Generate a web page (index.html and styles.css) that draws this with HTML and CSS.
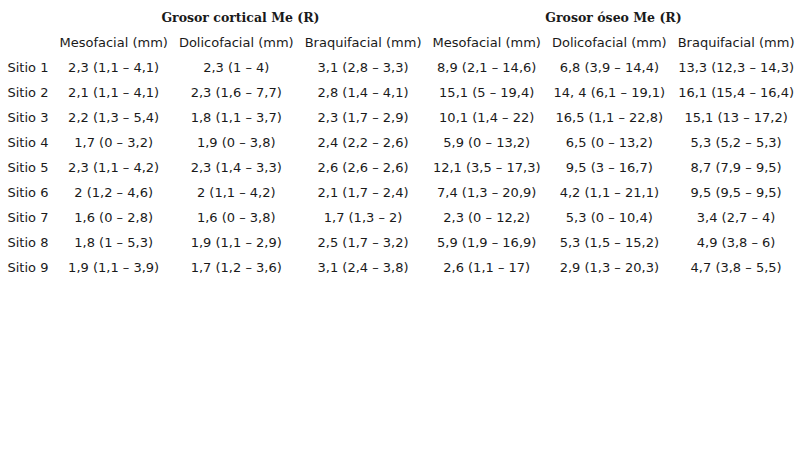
FILE: index.html
```html
<!DOCTYPE html>
<html lang="es">
<head>
<meta charset="utf-8">
<link rel="stylesheet" href="styles.css">
</head>
<body>
<table class="data">
  <thead>
    <tr class="group-row">
      <th></th>
      <th colspan="3" class="group">Grosor cortical Me (R)</th>
      <th colspan="3" class="group">Grosor óseo Me (R)</th>
    </tr>
    <tr class="head-row">
      <th></th>
      <th>Mesofacial (mm)</th>
      <th>Dolicofacial (mm)</th>
      <th>Braquifacial (mm)</th>
      <th>Mesofacial (mm)</th>
      <th>Dolicofacial (mm)</th>
      <th>Braquifacial (mm)</th>
    </tr>
  </thead>
  <tbody>
    <tr><td class="site">Sitio 1</td><td>2,3 (1,1 – 4,1)</td><td>2,3 (1 – 4)</td><td>3,1 (2,8 – 3,3)</td><td>8,9 (2,1 – 14,6)</td><td>6,8 (3,9 – 14,4)</td><td>13,3 (12,3 – 14,3)</td></tr>
    <tr><td class="site">Sitio 2</td><td>2,1 (1,1 – 4,1)</td><td>2,3 (1,6 – 7,7)</td><td>2,8 (1,4 – 4,1)</td><td>15,1 (5 – 19,4)</td><td>14, 4 (6,1 – 19,1)</td><td>16,1 (15,4 – 16,4)</td></tr>
    <tr><td class="site">Sitio 3</td><td>2,2 (1,3 – 5,4)</td><td>1,8 (1,1 – 3,7)</td><td>2,3 (1,7 – 2,9)</td><td>10,1 (1,4 – 22)</td><td>16,5 (1,1 – 22,8)</td><td>15,1 (13 – 17,2)</td></tr>
    <tr><td class="site">Sitio 4</td><td>1,7 (0 – 3,2)</td><td>1,9 (0 – 3,8)</td><td>2,4 (2,2 – 2,6)</td><td>5,9 (0 – 13,2)</td><td>6,5 (0 – 13,2)</td><td>5,3 (5,2 – 5,3)</td></tr>
    <tr><td class="site">Sitio 5</td><td>2,3 (1,1 – 4,2)</td><td>2,3 (1,4 – 3,3)</td><td>2,6 (2,6 – 2,6)</td><td>12,1 (3,5 – 17,3)</td><td>9,5 (3 – 16,7)</td><td>8,7 (7,9 – 9,5)</td></tr>
    <tr><td class="site">Sitio 6</td><td>2 (1,2 – 4,6)</td><td>2 (1,1 – 4,2)</td><td>2,1 (1,7 – 2,4)</td><td>7,4 (1,3 – 20,9)</td><td>4,2 (1,1 – 21,1)</td><td>9,5 (9,5 – 9,5)</td></tr>
    <tr><td class="site">Sitio 7</td><td>1,6 (0 – 2,8)</td><td>1,6 (0 – 3,8)</td><td>1,7 (1,3 – 2)</td><td>2,3 (0 – 12,2)</td><td>5,3 (0 – 10,4)</td><td>3,4 (2,7 – 4)</td></tr>
    <tr><td class="site">Sitio 8</td><td>1,8 (1 – 5,3)</td><td>1,9 (1,1 – 2,9)</td><td>2,5 (1,7 – 3,2)</td><td>5,9 (1,9 – 16,9)</td><td>5,3 (1,5 – 15,2)</td><td>4,9 (3,8 – 6)</td></tr>
    <tr><td class="site">Sitio 9</td><td>1,9 (1,1 – 3,9)</td><td>1,7 (1,2 – 3,6)</td><td>3,1 (2,4 – 3,8)</td><td>2,6 (1,1 – 17)</td><td>2,9 (1,3 – 20,3)</td><td>4,7 (3,8 – 5,5)</td></tr>
  </tbody>
</table>
</body>
</html>
```

FILE: styles.css
```css
html, body {
  margin: 0;
  padding: 0;
  background: #ffffff;
}
body {
  padding: 4px 0 0 2px;
  font-family: "DejaVu Sans", sans-serif;
  font-size: 13px;
  color: #1a1a1a;
}
.data {
  border-collapse: collapse;
}
.data th,
.data td {
  padding: 0 5.5px;
  height: 25px;
  text-align: center;
  white-space: nowrap;
  font-weight: normal;
}
.data .group {
  font-family: "DejaVu Serif", serif;
  font-weight: bold;
  font-size: 12.5px;
  height: 26px;
  vertical-align: middle;
}
.data .head-row th {
  height: 25px;
  vertical-align: middle;
}
.data .site {
  text-align: left;
}
```
